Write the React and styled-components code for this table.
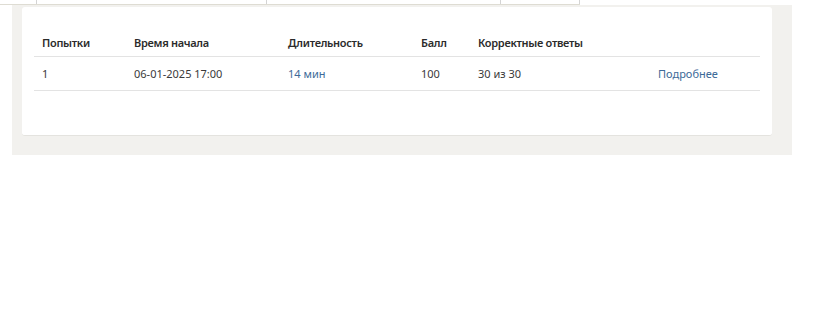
import React from "react";
import styled, { createGlobalStyle } from "styled-components";

const Global = createGlobalStyle`
  html, body { margin: 0; padding: 0; background: #fff; }
  body { font-family: "Noto Sans", "Open Sans", sans-serif; }
`;

const TabStrip = styled.div`
  display: flex;
  width: 580px;
  height: 4px;
  border-bottom: 1px solid #dedcd3;
  box-sizing: content-box;
`;

const TabCell = styled.div`
  width: ${(p) => p.$w}px;
  border-right: 1px solid #d4d4d4;
  box-sizing: border-box;
`;

const Panel = styled.div`
  margin-left: 12px;
  width: 780px;
  background: #f2f1ee;
  padding: 2px 20px 19px 10px;
  box-sizing: border-box;
`;

const Card = styled.div`
  background: #fff;
  border-radius: 3px;
  border-bottom: 1px solid #e4e3df;
  padding: 21px 12px 44px 12px;
`;

const Row = styled.div`
  display: grid;
  grid-template-columns: 92px 154px 133px 57px 180px 110px;
  height: ${(p) => p.$h}px;
  align-items: center;
  border-bottom: 1px solid #e3e3e3;
  font-size: 11px;
  color: ${(p) => (p.$head ? "#2b2b2b" : "#3a3a3a")};
  font-weight: ${(p) => (p.$head ? 600 : 400)};
  letter-spacing: ${(p) => (p.$head ? "-0.3px" : "0")};
`;

const Cell = styled.div`
  padding-left: 8px;
  white-space: nowrap;
  color: ${(p) => (p.$link ? "#3d6a98" : "inherit")};
`;

export default function App() {
  return (
    <>
      <Global />
      <TabStrip>
        <TabCell $w={37} />
        <TabCell $w={230} />
        <TabCell $w={234} />
        <TabCell $w={79} />
      </TabStrip>
      <Panel>
        <Card>
          <Row $head $h={28}>
            <Cell>Попытки</Cell>
            <Cell>Время начала</Cell>
            <Cell>Длительность</Cell>
            <Cell>Балл</Cell>
            <Cell>Корректные ответы</Cell>
            <Cell />
          </Row>
          <Row $h={33}>
            <Cell>1</Cell>
            <Cell>06-01-2025 17:00</Cell>
            <Cell $link>14 мин</Cell>
            <Cell>100</Cell>
            <Cell>30 из 30</Cell>
            <Cell $link>Подробнее</Cell>
          </Row>
        </Card>
      </Panel>
    </>
  );
}
